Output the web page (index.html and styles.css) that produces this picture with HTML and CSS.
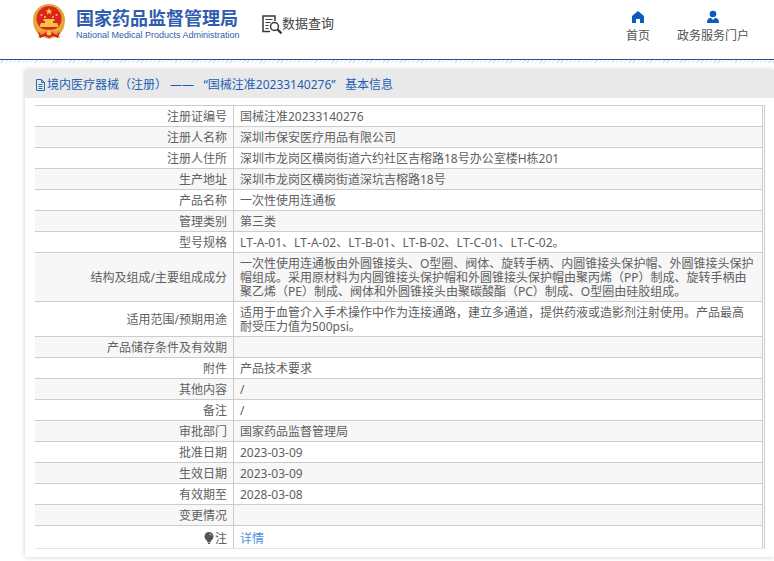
FILE: index.html
```html
<!DOCTYPE html>
<html lang="zh-CN">
<head>
<meta charset="utf-8">
<title>国家药品监督管理局 数据查询</title>
<link rel="stylesheet" href="styles.css">
</head>
<body>
<header class="header">
  <a class="brand" href="#">
    <svg class="emblem" viewBox="0 0 34 36" aria-hidden="true">
      <path fill="#e2a53a" d="M17 0C8 0 1 7 1 16c0 6 2 11 6 15l-1 3 5-1 6 2 6-2 5 1-1-3c4-4 6-9 6-15C33 7 26 0 17 0z"/>
      <path fill="#d8241f" d="M6 28c3 2 6 1 8-1l3 3 3-3c2 2 5 3 8 1l-2 6-5-2-4 2-4-2-5 2z"/>
      <circle cx="17" cy="14.500" r="12.500" fill="#de251d"/>
      <path fill="#f8cf4d" d="M17 4l1 2.400h2.500l-2 1.600.8 2.500L17 9l-2.300 1.500.8-2.500-2-1.600H16z"/>
      <g fill="#f8cf4d"><circle cx="9.500" cy="11" r="1"/><circle cx="13" cy="13" r="1"/><circle cx="21" cy="13" r="1"/><circle cx="24.500" cy="11" r="1"/></g>
      <path fill="#f6c443" d="M12 15h10l1 2h-2v2h4l1 2v2H8v-2l1-2h4v-2h-2z"/>
      <path fill="none" stroke="#f3bd43" d="M6 24c4 3 18 3 22 0M8 30c3 0 5-1 6-3M26 30c-3 0-5-1-6-3"/>
      <circle cx="17" cy="29" r="2.500" fill="#f6c443"/>
    </svg>
    <span class="brand-text">
      <span class="brand-cn">国家药品监督管理局</span>
      <span class="brand-en">National Medical Products Administration</span>
    </span>
  </a>
  <div class="section">
    <svg class="section-icon" viewBox="0 0 20 20" aria-hidden="true">
      <g fill="none" stroke="#35383f">
        <path stroke-width="1.500" d="M8 16.500H1V1h12v5"/>
        <path d="M3.500 4.500h7M3.500 7.500h5M3.500 10.500h3M3.500 13.500h3"/>
        <circle cx="12.500" cy="11.500" r="4" stroke-width="1.500"/>
        <path stroke-width="2.400" d="M15.500 14.500l4 4"/>
      </g>
    </svg>
    <span>数据查询</span>
  </div>
  <nav class="nav">
    <a class="nav-link" href="#">
      <svg class="nav-icon" viewBox="0 0 14 14" aria-hidden="true"><path fill="#0b5cbc" d="M7 1l6 5v7H9V9H5v4H1V6z"/></svg>
      <span>首页</span>
    </a>
    <a class="nav-link" href="#">
      <svg class="nav-icon" viewBox="0 0 14 14" aria-hidden="true"><circle cx="7" cy="4" r="3.300" fill="#0b5cbc"/><path fill="#0b5cbc" d="M1 13c0-3 1-5 4-5l2 2 2-2c3 0 4 2 4 5z"/></svg>
      <span>政务服务门户</span>
    </a>
  </nav>
</header>
<div class="stripes"></div>
<main class="panel">
  <h1 class="panel-title">
    <svg class="doc-icon" viewBox="0 0 11 12" aria-hidden="true"><path fill="none" stroke="#2468b8" d="M1.500.5h5l3 3v8h-8zM6.500.5v3h3M3.500 5.500h4M3.500 7.500h4M3.500 9.500h4"/></svg>
    <span>境内医疗器械（注册） ——   “国械注准20233140276”   基本信息</span>
  </h1>
  <div class="panel-body">
    <table class="info">
      <tbody>
        <tr><th scope="row">注册证编号</th><td>国械注准20233140276</td></tr>
        <tr><th scope="row">注册人名称</th><td>深圳市保安医疗用品有限公司</td></tr>
        <tr><th scope="row">注册人住所</th><td>深圳市龙岗区横岗街道六约社区吉榕路18号办公室楼H栋201</td></tr>
        <tr><th scope="row">生产地址</th><td>深圳市龙岗区横岗街道深坑吉榕路18号</td></tr>
        <tr><th scope="row">产品名称</th><td>一次性使用连通板</td></tr>
        <tr><th scope="row">管理类别</th><td>第三类</td></tr>
        <tr><th scope="row">型号规格</th><td>LT-A-01、LT-A-02、LT-B-01、LT-B-02、LT-C-01、LT-C-02。</td></tr>
        <tr><th scope="row">结构及组成/主要组成成分</th><td>一次性使用连通板由外圆锥接头、O型圈、阀体、旋转手柄、内圆锥接头保护帽、外圆锥接头保护帽组成。采用原材料为内圆锥接头保护帽和外圆锥接头保护帽由聚丙烯（PP）制成、旋转手柄由聚乙烯（PE）制成、阀体和外圆锥接头由聚碳酸酯（PC）制成、O型圈由硅胶组成。</td></tr>
        <tr><th scope="row">适用范围/预期用途</th><td>适用于血管介入手术操作中作为连接通路，建立多通道，提供药液或造影剂注射使用。产品最高耐受压力值为500psi。</td></tr>
        <tr><th scope="row">产品储存条件及有效期</th><td></td></tr>
        <tr><th scope="row">附件</th><td>产品技术要求</td></tr>
        <tr><th scope="row">其他内容</th><td>/</td></tr>
        <tr><th scope="row">备注</th><td>/</td></tr>
        <tr><th scope="row">审批部门</th><td>国家药品监督管理局</td></tr>
        <tr><th scope="row">批准日期</th><td>2023-03-09</td></tr>
        <tr><th scope="row">生效日期</th><td>2023-03-09</td></tr>
        <tr><th scope="row">有效期至</th><td>2028-03-08</td></tr>
        <tr><th scope="row">变更情况</th><td></td></tr>
        <tr class="note">
          <th scope="row"><svg class="bulb" viewBox="0 0 10 12" aria-hidden="true"><path fill="#555" d="M5 0a4.500 4.500 0 0 0-2.500 8.200L3.500 10h3l1-1.800A4.500 4.500 0 0 0 5 0zM3.500 10.500h3L6 12H4z"/><path fill="none" stroke="#ddd" d="M5.500 2c1 0 1.500.7 1.700 1.500"/></svg>注</th>
          <td><a class="detail" href="#">详情</a></td>
        </tr>
      </tbody>
    </table>
  </div>
</main>
</body>
</html>
```
FILE: styles.css
```css
body {
  margin: 0;
  background: #fff;
  color: #606060;
  font: 12px/14px "Noto Sans", "Noto Sans CJK SC", sans-serif;
  font-kerning: none;
  text-spacing-trim: space-all;
}

a {
  text-decoration: none;
}

.header {
  display: flex;
  align-items: flex-start;
  height: 59px;
  padding: 0 25px 0 32px;
  border-bottom: 1px solid #1f5590;
}

.brand {
  display: flex;
  gap: 10px;
  padding-top: 4px;
  color: #2f5caf;
}

.emblem {
  width: 34px;
  height: 36px;
}

.brand-text {
  display: flex;
  flex-direction: column;
  width: 160px;
  padding-top: 4px;
  white-space: nowrap;
}

.brand-cn {
  font-size: 18px;
  line-height: 20px;
  font-weight: 700;
}

.brand-en {
  font: 9px/14px "Liberation Sans", sans-serif;
}

.section {
  display: flex;
  gap: 0;
  padding: 15px 0 0 26px;
  color: #444;
  font-size: 13px;
  line-height: 16px;
}

.section-icon {
  width: 20px;
  height: 20px;
}

.nav {
  display: flex;
  gap: 27px;
  margin-left: auto;
  padding-top: 10px;
}

.nav-link {
  display: flex;
  flex-direction: column;
  align-items: center;
  gap: 5px;
  color: #555;
}

.nav-icon {
  width: 14px;
  height: 14px;
}

.stripes {
  height: 3px;
  background: repeating-linear-gradient(135deg, #fff 0 2px, #d6e2f2 2px 3px);
}

.panel {
  margin: 7px 0 5px 25px;
  background: #fff;
  box-shadow: 0 0 5px #ccc;
}

.panel-title {
  display: flex;
  align-items: center;
  gap: 1px;
  height: 26px;
  margin: 0;
  padding: 2px 0 0 10px;
  background: #e9e9e9;
  color: #1a5fb4;
  font-size: 12px;
  font-weight: 400;
  white-space: pre-wrap;
}

.doc-icon {
  width: 11px;
  height: 12px;
}

.panel-body {
  padding: 7px 9px 8px 10px;
}

.info {
  width: 100%;
  border-collapse: separate;
  border-spacing: 0;
  border-right: 1px solid #ccc;
  padding-right: 1px;
}

.info th,
.info td {
  height: 14px;
  padding: 4px 6px 2px;
  border: 0 solid #ccc;
  border-width: 0 1px 1px 0;
}

.info th {
  width: 186px;
  font-weight: 400;
  text-align: right;
}

.info td {
  padding-right: 8px;
  text-align: left;
}

.info tr:first-child > * {
  border-top-width: 1px;
}

.info tr:nth-child(even) {
  background: #f7f7f7;
}

.info .note > * {
  padding-top: 6px;
  border-bottom-color: #e6e6e6;
}

.bulb {
  width: 10px;
  height: 12px;
  margin-right: 1px;
  vertical-align: -1px;
}

.detail {
  color: #4a90e2;
}
```
